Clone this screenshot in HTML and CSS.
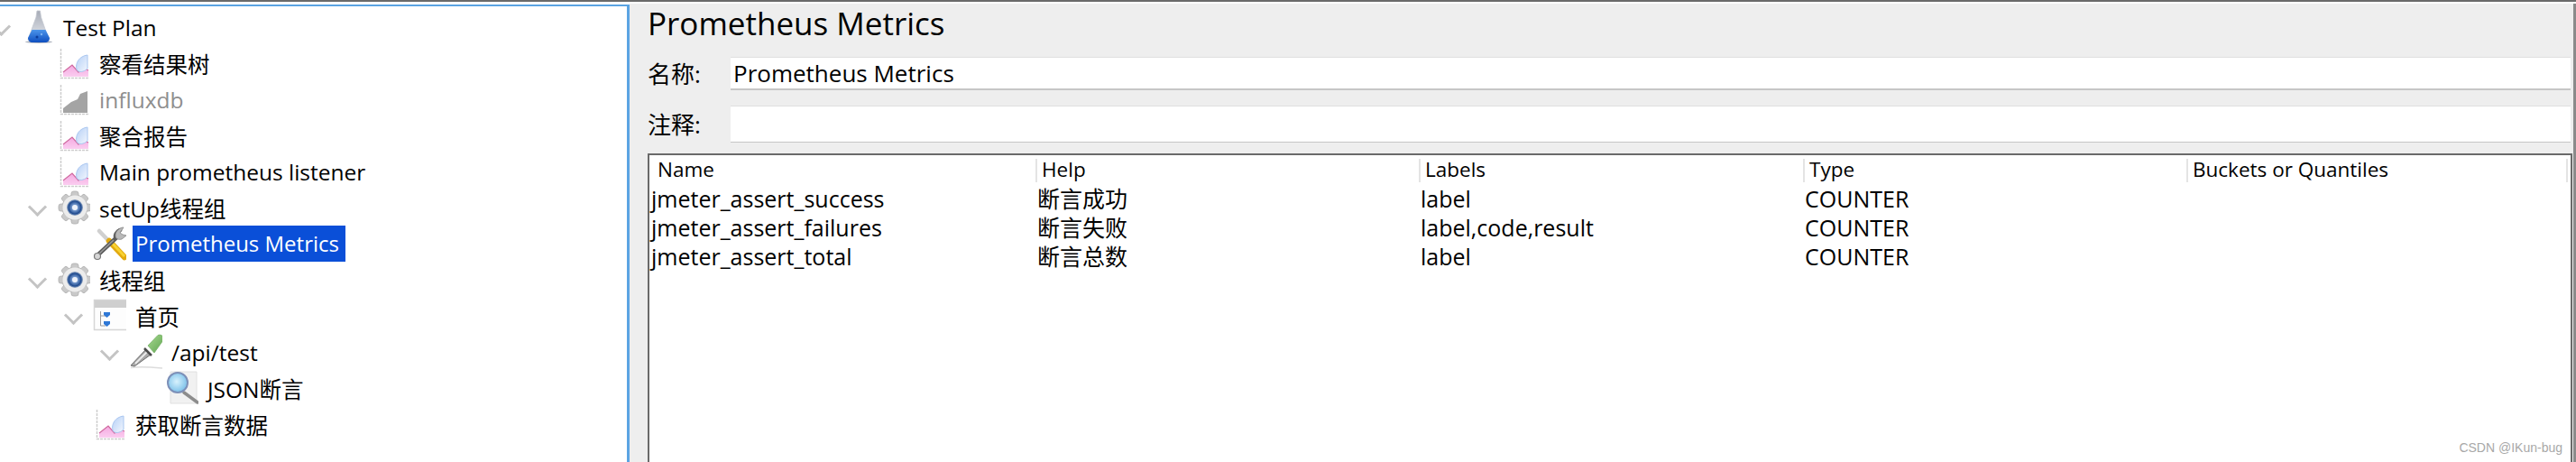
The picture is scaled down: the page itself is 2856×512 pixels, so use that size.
FILE: index.html
```html
<!DOCTYPE html>
<html lang="en">
<head>
  <meta charset="UTF-8" />
  <title>Prometheus Metrics</title>
  <link rel="stylesheet" href="styles.css">
</head>
<body>
  <svg class="defs" width="0" height="0">
    <defs>
      <linearGradient id="pinkFill" x1="0" y1="0" x2="0" y2="1">
        <stop offset="0" stop-color="#f4a8e0"/>
        <stop offset="1" stop-color="#fbcdf0"/>
      </linearGradient>
      <linearGradient id="bubbleFill" x1="0" y1="0" x2="1" y2="1">
        <stop offset="0" stop-color="#b4cff6"/>
        <stop offset="1" stop-color="#f3f7fe"/>
      </linearGradient>
      <linearGradient id="flaskFill" x1="0" y1="0" x2="0" y2="1">
        <stop offset="0" stop-color="#4c95ea"/>
        <stop offset="1" stop-color="#0f4fc0"/>
      </linearGradient>
      <linearGradient id="flaskGlass" x1="0" y1="0" x2="0" y2="1">
        <stop offset="0" stop-color="#a6abb6"/>
        <stop offset="1" stop-color="#e6e9ef"/>
      </linearGradient>
      <radialGradient id="gearHub" cx="0.5" cy="0.5" r="0.5">
        <stop offset="0" stop-color="#e6edf8"/>
        <stop offset="0.4" stop-color="#6d92c8"/>
        <stop offset="0.78" stop-color="#1f4a8e"/>
        <stop offset="1" stop-color="#9fb0c9"/>
      </radialGradient>
      <radialGradient id="lensFill" cx="0.45" cy="0.45" r="0.6">
        <stop offset="0" stop-color="#d8f2fd"/>
        <stop offset="1" stop-color="#74bde8"/>
      </radialGradient>
      <linearGradient id="bulbFill" x1="0" y1="0" x2="1" y2="1">
        <stop offset="0" stop-color="#a7d88f"/>
        <stop offset="1" stop-color="#5fa552"/>
      </linearGradient>

      <symbol id="icon-chart" viewBox="0 0 40 40">
        <path d="M7.500 4V36.500H39" fill="none" stroke="#cdcdcd" stroke-width="1.500" stroke-dasharray="3 1"/>
        <path d="M10 35V30L20 22L27 30L32 25L38 28V35Z" fill="url(#pinkFill)"/>
        <path d="M10 30L20 22L27 30L32 25L38 28" fill="none" stroke="#cf6a9f" stroke-width="1.200"/>
        <path d="M25 27C23 20 28 12 37 11V26C33 30 27 31 25 27Z" fill="url(#bubbleFill)" stroke="#a9c6f0" stroke-width="1"/>
      </symbol>

      <symbol id="icon-chart-off" viewBox="0 0 40 40">
        <path d="M7.500 4V36.500H39" fill="none" stroke="#cdcdcd" stroke-width="1.500" stroke-dasharray="3 1"/>
        <path d="M10 35V30L19 23L26 20L29 14L37 11V35Z" fill="#a4a4a4"/>
      </symbol>

      <symbol id="icon-gear" viewBox="0 0 40 40">
        <g fill="#c9c9c9" stroke="#adadad" stroke-width="0.800">
          <circle cx="23" cy="20" r="14"/>
          <rect x="19" y="2" width="8" height="36" rx="2.500"/>
          <rect x="19" y="2" width="8" height="36" rx="2.500" transform="rotate(45 23 20)"/>
          <rect x="19" y="2" width="8" height="36" rx="2.500" transform="rotate(90 23 20)"/>
          <rect x="19" y="2" width="8" height="36" rx="2.500" transform="rotate(135 23 20)"/>
        </g>
        <circle cx="23" cy="20" r="13.500" fill="#ececec"/>
        <circle cx="23" cy="20" r="9" fill="url(#gearHub)"/>
        <circle cx="23" cy="20" r="3" fill="#eef2fa"/>
      </symbol>

      <symbol id="icon-flask" viewBox="0 0 40 40">
        <ellipse cx="23" cy="36.500" rx="15" ry="1.500" fill="#aeb4bf"/>
        <path d="M20 9L21 2H24.500L25.500 9L34 34H11Z" fill="url(#flaskGlass)" stroke="#c3c7cf" stroke-width="0.800"/>
        <path d="M15.500 23H30.500L35 32C35 35 33 37 30 37H16C13 37 11 35 11 32Z" fill="url(#flaskFill)"/>
        <circle cx="21" cy="31" r="1.500" fill="#0b3d9c"/>
        <circle cx="26" cy="28" r="1.200" fill="#7fb4f2"/>
      </symbol>

      <symbol id="icon-tools" viewBox="0 0 40 40">
        <path d="M10 6L36 33" stroke="#d0d0d0" stroke-width="4.500" stroke-linecap="round"/>
        <path d="M21 17L38 35" stroke="#e2a90f" stroke-width="6.500" stroke-linecap="round"/>
        <path d="M22 17L38 34" stroke="#f8d232" stroke-width="3"/>
        <path d="M33 5C29 7 27 11 28.500 14L8 33" fill="none" stroke="#5b5b5b" stroke-width="4.500" stroke-linecap="round"/>
        <path d="M9 32L26 16" stroke="#9a9a9a" stroke-width="1.500"/>
        <path d="M37 2C33 2 28 6 28 11C28 15 32 16 35 15L40 11L36 10L33 8Z" fill="#b9b9b9" stroke="#868686" stroke-width="0.800"/>
        <circle cx="8" cy="34" r="3.500" fill="#d6d6d6" stroke="#777" stroke-width="1.200"/>
      </symbol>

      <symbol id="icon-controller" viewBox="0 0 40 40">
        <rect x="4.500" y="2.500" width="37" height="33" fill="#fdfdfd" stroke="#d6d6d6" stroke-width="1.500"/>
        <rect x="5" y="3" width="36" height="8" fill="#cfcfcf"/>
        <path d="M11.500 15V31H17M11.500 20H17" fill="none" stroke="#9a9a9a" stroke-width="1"/>
        <path d="M15 16H22V19L18.500 22L15 19Z" fill="#2f78d6"/>
        <path d="M15 26H22V29L18.500 32L15 29Z" fill="#2f78d6"/>
      </symbol>

      <symbol id="icon-dropper" viewBox="0 0 40 40">
        <path d="M5 37.500C15 36 28 37 40 38" fill="none" stroke="#dcdcdc" stroke-width="1.500"/>
        <path d="M5 35L21 18L27 23L9 36Z" fill="#a8a8a8" stroke="#6c6c6c" stroke-width="1"/>
        <path d="M10 33L23 20" stroke="#ececec" stroke-width="1.800"/>
        <path d="M20 16L28 24" stroke="#4a4a4a" stroke-width="2.500"/>
        <path d="M24 13L35 1.500C39 0 42 3 41 7L31 21Z" fill="url(#bulbFill)" stroke="#7ab26b" stroke-width="0.800"/>
      </symbol>

      <symbol id="icon-lens" viewBox="0 0 40 40">
        <path d="M9 2H38V37H9Z" fill="#f1f1f1" stroke="#e0e0e0" stroke-width="1"/>
        <path d="M24 25L39 36" stroke="#8c8c8c" stroke-width="3.500" stroke-linecap="round"/>
        <circle cx="17" cy="14" r="11" fill="url(#lensFill)" stroke="#7d90b8" stroke-width="2"/>
      </symbol>
    </defs>
  </svg>

  <div class="top-line"></div>
  <div class="split">
    <div class="tree">
      <div class="row depth-0"><span class="chevron"></span><svg class="icon"><use href="#icon-flask"/></svg><span class="label">Test Plan</span></div>
      <div class="row depth-1"><span class="chevron none"></span><svg class="icon"><use href="#icon-chart"/></svg><span class="label">察看结果树</span></div>
      <div class="row depth-1"><span class="chevron none"></span><svg class="icon"><use href="#icon-chart-off"/></svg><span class="label off">influxdb</span></div>
      <div class="row depth-1"><span class="chevron none"></span><svg class="icon"><use href="#icon-chart"/></svg><span class="label">聚合报告</span></div>
      <div class="row depth-1"><span class="chevron none"></span><svg class="icon"><use href="#icon-chart"/></svg><span class="label">Main prometheus listener</span></div>
      <div class="row depth-1"><span class="chevron"></span><svg class="icon"><use href="#icon-gear"/></svg><span class="label">setUp线程组</span></div>
      <div class="row depth-2"><span class="chevron none"></span><svg class="icon"><use href="#icon-tools"/></svg><span class="label selected">Prometheus Metrics</span></div>
      <div class="row depth-1"><span class="chevron"></span><svg class="icon"><use href="#icon-gear"/></svg><span class="label">线程组</span></div>
      <div class="row depth-2"><span class="chevron"></span><svg class="icon"><use href="#icon-controller"/></svg><span class="label">首页</span></div>
      <div class="row depth-3"><span class="chevron"></span><svg class="icon"><use href="#icon-dropper"/></svg><span class="label">/api/test</span></div>
      <div class="row depth-4"><span class="chevron none"></span><svg class="icon"><use href="#icon-lens"/></svg><span class="label">JSON断言</span></div>
      <div class="row depth-2"><span class="chevron none"></span><svg class="icon"><use href="#icon-chart"/></svg><span class="label">获取断言数据</span></div>
    </div>

    <div class="panel">
      <div class="title">Prometheus Metrics</div>
      <div class="field">
        <span class="field-label">名称:</span>
        <div class="input">Prometheus Metrics</div>
      </div>
      <div class="field">
        <span class="field-label">注释:</span>
        <div class="input tall"></div>
      </div>
      <div class="table">
        <div class="table-row head">
          <div>Name</div><div>Help</div><div>Labels</div><div>Type</div><div>Buckets or Quantiles</div>
        </div>
        <div class="table-row">
          <div>jmeter_assert_success</div><div>断言成功</div><div>label</div><div>COUNTER</div><div></div>
        </div>
        <div class="table-row">
          <div>jmeter_assert_failures</div><div>断言失败</div><div>label,code,result</div><div>COUNTER</div><div></div>
        </div>
        <div class="table-row">
          <div>jmeter_assert_total</div><div>断言总数</div><div>label</div><div>COUNTER</div><div></div>
        </div>
      </div>
    </div>
  </div>
  <div class="watermark">CSDN @IKun-bug</div>
</body>
</html>
```

FILE: styles.css
```css
* {
  margin: 0;
  padding: 0;
  box-sizing: border-box;
}

body {
  position: relative;
  height: 512px;
  overflow: hidden;
  background: #fff;
  color: #000;
  font-family: "Open Sans", "Noto Sans CJK SC", sans-serif;
  font-size: 24.5px;
}

.defs {
  position: absolute;
}

.top-line {
  height: 4px;
  border-top: 2px solid #6a6a6a;
  margin-top: 0;
}

.split {
  display: flex;
  height: 508px;
}

/* left side */
.tree {
  width: 698px;
  margin-top: 1px;
  padding-top: 3px;
  border-top: 2px solid #5ba4e3;
  border-right: 3px solid #5ba4e3;
  overflow: hidden;
}

.row {
  display: flex;
  align-items: center;
  height: 40px;
}

.depth-0 { padding-left: 0; }
.depth-1 { padding-left: 40px; }
.depth-2 { padding-left: 80px; }
.depth-3 { padding-left: 120px; }
.depth-4 { padding-left: 160px; }

.chevron {
  position: relative;
  flex: none;
  width: 40px;
  height: 40px;
  margin-left: -20px;
}

.chevron::before {
  content: "";
  position: absolute;
  left: 14px;
  top: 12px;
  width: 12px;
  height: 12px;
  border-right: 3px solid #c4c4c4;
  border-bottom: 3px solid #c4c4c4;
  transform: rotate(45deg);
}

.chevron.none::before {
  display: none;
}

.icon {
  flex: none;
  width: 40px;
  height: 40px;
  overflow: visible;
  filter: blur(0.3px);
}

.label {
  margin-left: 10px;
  white-space: nowrap;
}

.label.off {
  color: #8e8e8e;
}

.label.selected {
  height: 40px;
  line-height: 40px;
  margin-left: 7px;
  padding: 0 7px 0 3px;
  background: #0a4fd8;
  color: #fff;
  font-size: 24px;
}

/* right side */
.panel {
  flex: 1;
  min-width: 0;
  padding: 0 1px 0 20px;
  background: #eee;
  border-right: 3px solid #8a8a8a;
}

.title {
  height: 47px;
  line-height: 44px;
  font-size: 35px;
}

.field {
  display: flex;
  align-items: center;
  margin-top: 12px;
  font-size: 26px;
}

.field + .field {
  margin-top: 17px;
}

.field-label {
  width: 92px;
  flex: none;
  line-height: 30px;
}

.input {
  flex: 1;
  height: 37px;
  line-height: 35px;
  margin-right: 2px;
  padding-left: 3px;
  background: #fff;
  border-top: 1px solid #e0e0e0;
  border-bottom: 2px solid #c6c6c6;
}

.input.tall {
  height: 41px;
  border-bottom: 1px solid #c6c6c6;
}

.table {
  height: 342px;
  margin-top: 12px;
  padding-top: 4px;
  background: #fff;
  border: 2px solid #6a6a6a;
  border-bottom: 0;
}

.table-row {
  display: grid;
  grid-template-columns: 428px 425px 426px 425px 1fr;
  height: 32px;
  line-height: 32px;
  font-size: 25px;
}

.table-row > div {
  padding-left: 2px;
  white-space: nowrap;
}

.head {
  height: 26px;
  margin-bottom: 2px;
  line-height: 24px;
  font-size: 22.500px;
}

.head > div {
  padding-left: 5px;
  border-left: 2px solid #e4e4e4;
}

.head > div:first-child {
  padding-left: 9px;
  border-left: 0;
}

.head > div:last-child {
  border-right: 2px solid #e4e4e4;
  margin-right: 3px;
}

.watermark {
  position: absolute;
  right: 15px;
  bottom: 8px;
  font-family: "Liberation Sans", sans-serif;
  font-size: 14px;
  color: #a8a8a8;
}
```
